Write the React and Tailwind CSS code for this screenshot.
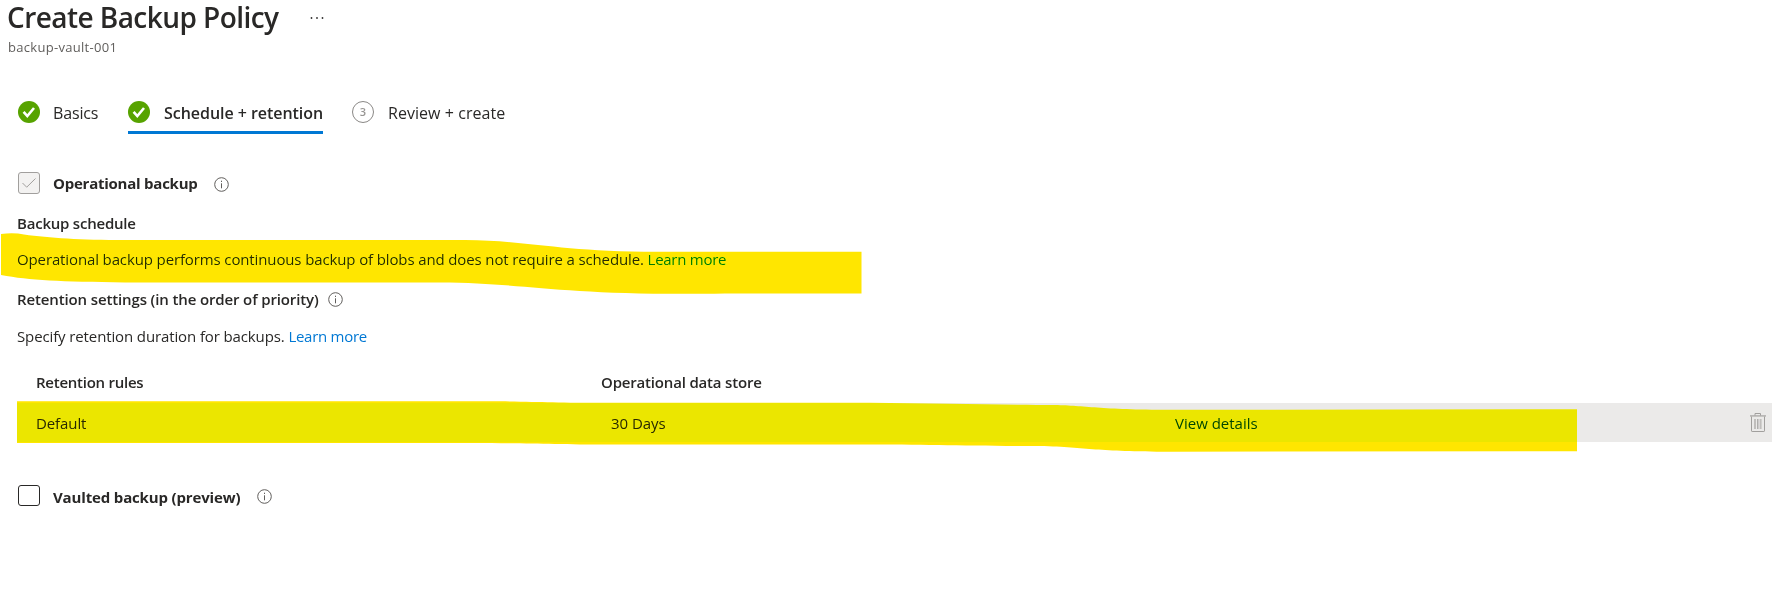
function DoneIcon() {
  return (
    <svg className="size-[22px] shrink-0" viewBox="0 0 22 22" fill="none">
      <circle cx="11" cy="11" r="11" fill="#57a300" />
      <path d="M5.600 10.800 9.300 15 16 7" stroke="#fff" strokeWidth="2.600" />
    </svg>
  );
}

function InfoIcon({ className }) {
  return (
    <svg className={`size-[15px] shrink-0 ${className}`} viewBox="0 0 15 15" fill="none" stroke="#605e5c">
      <circle cx="7.5" cy="7.5" r="6.8" />
      <path d="M7.5 6.3v5M7.5 3.7v1.3" />
    </svg>
  );
}

function TrashIcon() {
  return (
    <svg className="h-5 w-4 shrink-0" viewBox="0 0 16 20" fill="none" stroke="#a19f9d">
      <path d="M0 2.9h16" strokeWidth="1.6" stroke="#b5b3b1" />
      <path d="M5 2.5V.5h5.5v2M1.500 3.500v14.400q0 .6.6.6h11.800q.6 0 .6-.6V3.500" />
      <path d="M5 6v10M10.600 6v10" strokeWidth="2" stroke="#c0bebc" />
      <path d="M7.800 6v10" strokeWidth="1.200" />
    </svg>
  );
}

function Highlights() {
  return (
    <svg
      className="pointer-events-none absolute left-0 top-0 h-[595px] w-[1772px] mix-blend-darken"
      viewBox="0 0 1772 595"
      fill="#ffe600"
    >
      <path d="M1 234Q14 232.500 24 234.500C50 238 80 240 125 240H465C530 240.500 560 252 660 251.800H861.500V293.500H725C560 296 530 283 440 282.500H125C60 281.500 30 280.500 1 275Z" />
      <path d="M17 401.300H490C540 401.500 550 402.800 610 402.800H870C940 403.500 1010 405 1055 405C1085 405.500 1100 409.800 1170 409.800L1577 409.300V451.200L1170 451.700C1095 451.700 1090 447.500 1040 446C960 446 930 444.500 860 444.500H610C550 444.500 530 443 470 443H17Z" />
    </svg>
  );
}

export default function App() {
  return (
    <div className="relative isolate h-[595px] w-[1772px] bg-white font-['Open_Sans','Noto_Sans',sans-serif] text-[15px] leading-5 text-[#292827]">
      <header className="pl-[7px]">
        <div className="flex h-[34px] items-start">
          <h1 className="w-[303px] whitespace-nowrap text-[28px] font-semibold leading-[34px] tracking-[-0.56px]">
            Create Backup Policy
          </h1>
          <svg className="mt-[17px] h-0.5 w-[14px]" viewBox="0 0 14 2" fill="#323130">
            <circle cx="1.500" cy="1" r="0.900" />
            <circle cx="7" cy="1" r="0.900" />
            <circle cx="12.500" cy="1" r="0.900" />
          </svg>
        </div>
        <p className="mt-[5px] pl-px text-[13px] leading-4 tracking-[0.3px] text-[#605e5c]">backup-vault-001</p>
      </header>

      <nav className="mt-[43px] flex h-9 items-start pl-[18px] text-[16px]">
        <div className="flex w-[110px] pt-[3px]">
          <DoneIcon />
          <span className="ml-[13px] mt-0.5 whitespace-nowrap tracking-[-0.15px]">Basics</span>
        </div>
        <div className="flex h-9 w-[195px] border-b-[3px] border-[#0078d4] pt-[3px]">
          <DoneIcon />
          <span className="ml-3.5 mt-0.5 whitespace-nowrap font-semibold tracking-[-0.04px]">Schedule + retention</span>
        </div>
        <div className="ml-[29px] flex pt-[3px]">
          <span className="flex size-[22px] items-center justify-center rounded-full border border-[#8a8886] text-[11px] font-semibold text-[#979593]">
            3
          </span>
          <span className="ml-3.5 mt-0.5 whitespace-nowrap tracking-[0.05px]">Review + create</span>
        </div>
      </nav>

      <main className="pl-[17px]">
        <div className="mt-[38px] flex h-[22px] items-start pl-px">
          <span className="flex size-[22px] items-center justify-center rounded-[3px] border border-[#a19f9d] bg-[#f3f2f1]">
            <svg className="h-[10px] w-[14px]" viewBox="0 0 14 10" fill="none" stroke="#a19f9d">
              <path d="M.5 5 4.700 9.200 13.500.5" />
            </svg>
          </span>
          <span className="ml-[13px] mt-px w-[161px] whitespace-nowrap font-bold tracking-[-0.24px]">Operational backup</span>
          <InfoIcon className="mt-[5px]" />
        </div>

        <h2 className="mt-[19px] font-semibold tracking-[-0.22px]">Backup schedule</h2>
        <p className="mt-4 whitespace-nowrap tracking-[-0.125px]">
          Operational backup performs continuous backup of blobs and does not require a schedule.{" "}
          <a className="tracking-[-0.27px] text-[#0078d4]">Learn more</a>
        </p>

        <div className="mt-5 flex h-5 items-start">
          <h2 className="w-[311px] whitespace-nowrap font-semibold tracking-[-0.13px]">
            Retention settings (in the order of priority)
          </h2>
          <InfoIcon className="mt-[3px]" />
        </div>
        <p className="mt-[17px] whitespace-nowrap tracking-[-0.12px]">
          Specify retention duration for backups. <a className="tracking-[-0.27px] text-[#0078d4]">Learn more</a>
        </p>

        <div className="mt-[26px] grid grid-cols-[565px_1fr] pl-[19px] font-semibold">
          <span className="tracking-[-0.25px]">Retention rules</span>
          <span className="tracking-[-0.18px]">Operational data store</span>
        </div>
        <div className="mt-[11px] grid h-[39px] grid-cols-[575px_564px_1fr_auto] items-start bg-[#ebeae9] pl-[19px] pr-[6px] pt-[9px]">
          <span className="mt-px tracking-[-0.1px]">Default</span>
          <span className="mt-px tracking-[-0.05px]">30 Days</span>
          <span className="mt-px text-[#004578]">View details</span>
          <span className="mt-px">
            <TrashIcon />
          </span>
        </div>

        <div className="mt-[43px] flex h-[22px] items-start pl-px">
          <span className="h-[21px] w-[22px] rounded-[3px] border border-[#292827] bg-white" />
          <span className="ml-[13px] mt-0.5 w-[204px] whitespace-nowrap font-bold tracking-[-0.15px]">
            Vaulted backup (preview)
          </span>
          <InfoIcon className="mt-1" />
        </div>
      </main>

      <Highlights />
    </div>
  );
}
